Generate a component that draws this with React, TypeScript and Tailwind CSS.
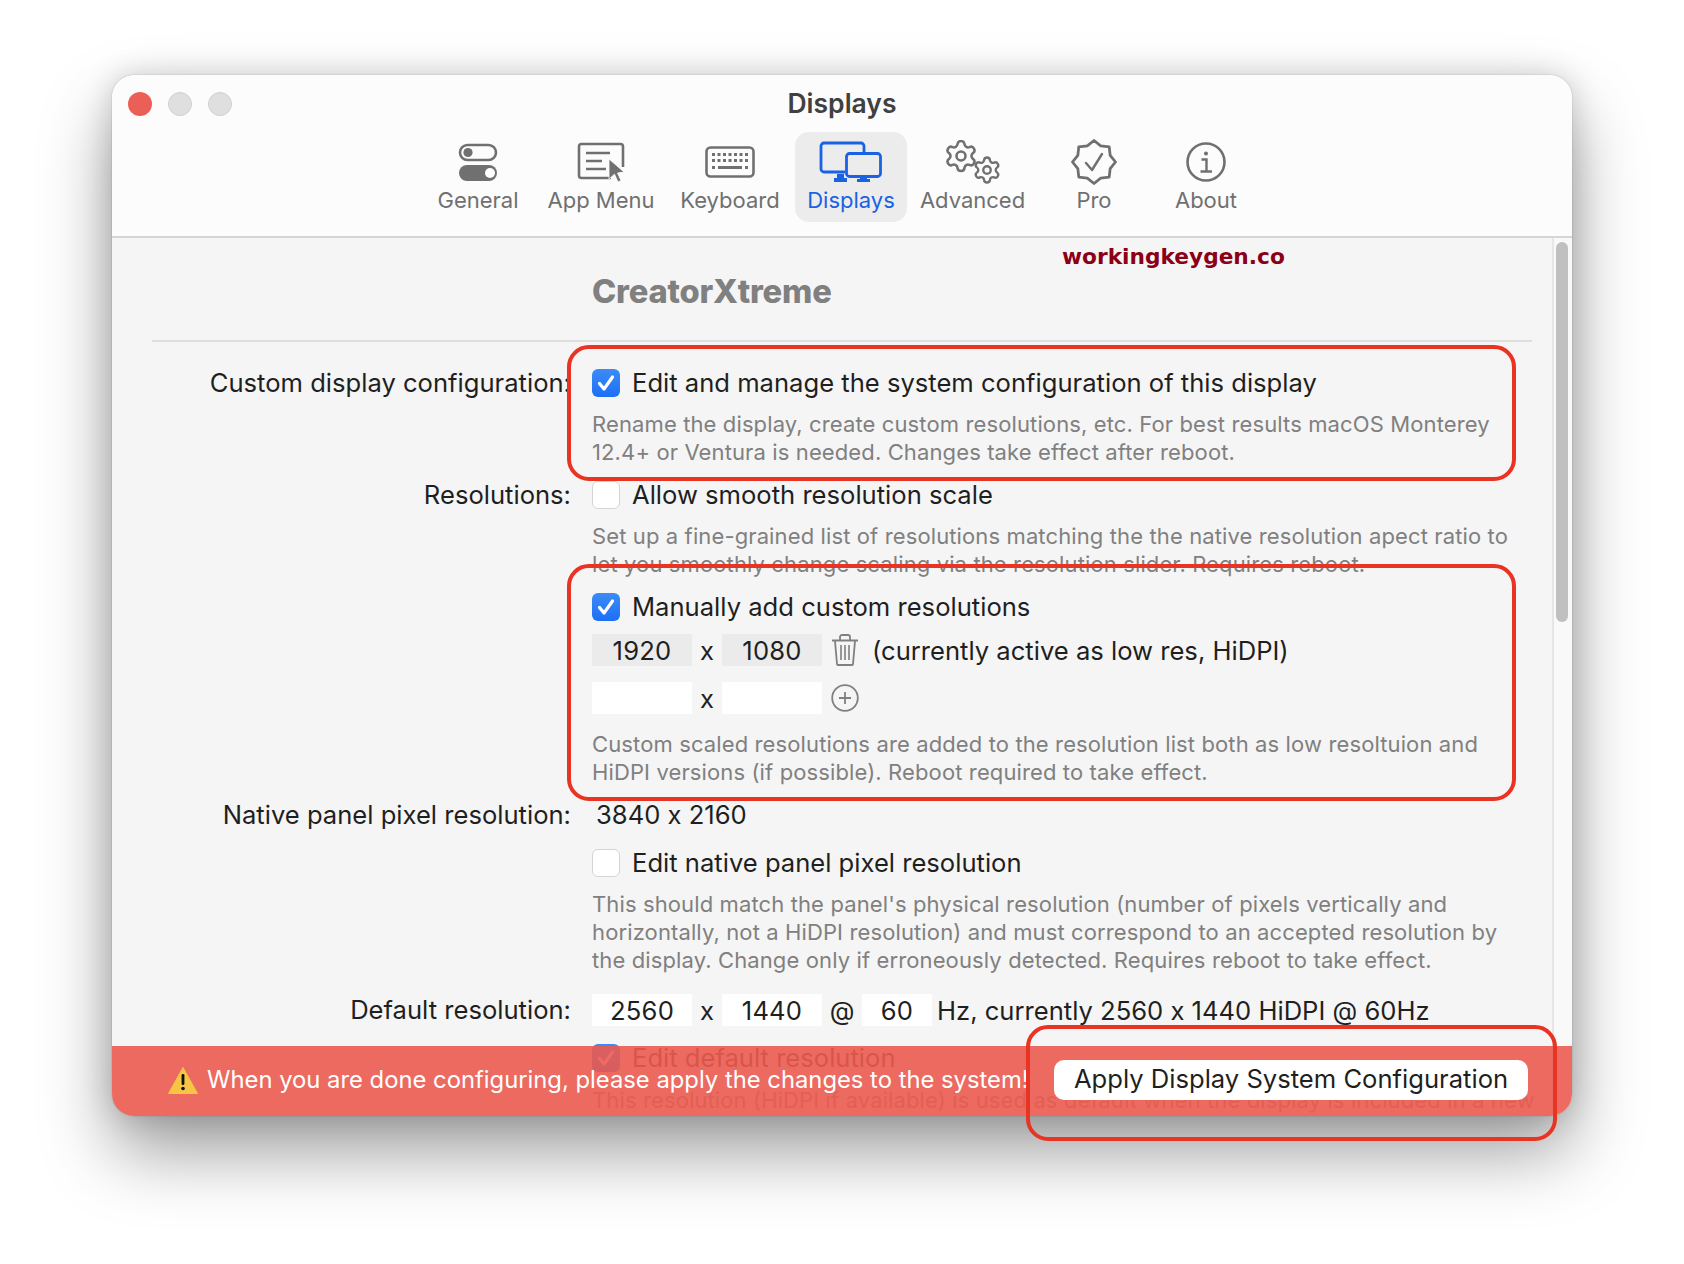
import { Settings } from "lucide-react"

const sans = "font-['Inter','Noto_Sans',sans-serif]"

// General - two toggles
function GeneralIcon() {
    return (
        <svg width="40" height="38" viewBox="0 0 40 38" fill="none">
            <rect x="2" y="2" width="36" height="15" rx="7.5" stroke="#707070" strokeWidth="2.6" />
            <circle cx="10" cy="9.5" r="4.6" fill="#707070" />
            <rect x="1" y="22" width="38" height="16" rx="8" fill="#707070" />
            <circle cx="32" cy="30" r="5" fill="#fff" />
        </svg>
    )
}

function AppMenuIcon() {
    return (
        <svg width="48" height="40" viewBox="0 0 48 40" fill="none">
            <path d="M34 36H4.500A2.500 2.500 0 0 1 2 33.500V4.500A2.500 2.500 0 0 1 4.500 2h39A2.500 2.500 0 0 1 46 4.500V25" stroke="#707070" strokeWidth="2.600" />
            <path d="M9 11h24M9 19h16M9 27h20" stroke="#707070" strokeWidth="2.400" />
            <path d="M32 17l15 13-6.500 1 3.500 7.500-3 1.500-3.500-7.800-5.500 4.800z" fill="#707070" stroke="#fcfcfc" strokeWidth="0.800" />
        </svg>
    )
}

function KeyboardIcon() {
    const keys = [0, 1, 2, 3, 4, 5, 6]
    return (
        <svg width="50" height="32" viewBox="0 0 50 32" fill="none">
            <rect x="1.500" y="1.500" width="47" height="29" rx="4" stroke="#707070" strokeWidth="2.600" />
            {[7, 13].map((y) =>
                keys.map((k) => <rect key={`${y}-${k}`} x={7 + k * 5.500} y={y} width="3" height="3" fill="#707070" />)
            )}
            <rect x="7" y="20" width="3" height="3" fill="#707070" />
            <rect x="13" y="20" width="24" height="3" fill="#707070" />
            <rect x="40" y="20" width="3" height="3" fill="#707070" />
        </svg>
    )
}

function DisplaysIcon() {
    return (
        <svg width="64" height="42" viewBox="0 0 64 42" fill="none">
            <path d="M26 31H5a3 3 0 0 1-3-3V5a3 3 0 0 1 3-3h37a3 3 0 0 1 3 3v6" stroke="#1a62e4" strokeWidth="2.800" />
            <rect x="27.500" y="12.500" width="34" height="23" rx="3" fill="#ececec" stroke="#1a62e4" strokeWidth="2.800" />
            <path d="M18 33h7v4h3v4H15v-4h3zM41 37h7v1h3v3H38v-3h3z" fill="#1a62e4" />
        </svg>
    )
}

function AdvancedIcon() {
    return (
        <svg width="56" height="44" viewBox="0 0 56 44" fill="none">
            <Settings x={-2} y={-2} width={36} height={36} color="#707070" strokeWidth={1.700} />
            <Settings x={27} y={15} width={30} height={30} color="#707070" strokeWidth={1.900} />
        </svg>
    )
}

// eight pointed seal, points worked out once at module level
const sealPoints = Array.from({ length: 16 }, (_, i) => {
    const r = i % 2 === 0 ? 21.500 : 17.500
    const a = (i * Math.PI) / 8 - Math.PI / 2
    return `${(23 + r * Math.cos(a)).toFixed(2)},${(23 + r * Math.sin(a)).toFixed(2)}`
}).join(" ")

function ProIcon() {
    return (
        <svg width="46" height="46" viewBox="0 0 46 46" fill="none">
            <polygon points={sealPoints} stroke="#707070" strokeWidth="2.800" strokeLinejoin="round" />
            <path d="M15 24l6 7 10-16" stroke="#707070" strokeWidth="2.400" strokeLinecap="round" strokeLinejoin="round" />
        </svg>
    )
}

function AboutIcon() {
    return (
        <svg width="40" height="40" viewBox="0 0 40 40" fill="none">
            <circle cx="20" cy="20" r="18.500" stroke="#707070" strokeWidth="2.600" />
            <circle cx="20" cy="11.500" r="2" fill="#707070" />
            <path d="M15.500 17.500H20.500V29M14.500 29.500H26" stroke="#707070" strokeWidth="2.400" />
        </svg>
    )
}

function TrashIcon() {
    return (
        <svg width="28" height="32" viewBox="0 0 28 32" fill="none" stroke="#808080">
            <path d="M1 6.500h26" strokeWidth="2" />
            <path d="M9 6V3a2 2 0 0 1 2-2h6a2 2 0 0 1 2 2v3" strokeWidth="1.800" />
            <path d="M4 7l2 23a1 1 0 0 0 1 1h14a1 1 0 0 0 1-1l2-23" strokeWidth="1.800" />
            <path d="M10 11v15M14 11v15M18 11v15" strokeWidth="1.600" />
        </svg>
    )
}

function PlusIcon() {
    return (
        <svg width="28" height="28" viewBox="0 0 28 28" fill="none" stroke="#808080">
            <circle cx="14" cy="14" r="12.800" strokeWidth="1.800" />
            <path d="M14 8v12M8 14h12" strokeWidth="1.800" />
        </svg>
    )
}

function WarningIcon() {
    return (
        <svg width="30" height="28" viewBox="0 0 30 28">
            <path d="M15 1.500L29.500 27.500H.500z" fill="#f7c545" stroke="#f7c545" strokeLinejoin="round" />
            <rect x="13.600" y="8" width="2.800" height="11" rx="1.200" fill="#111" />
            <circle cx="15" cy="22.500" r="1.800" fill="#111" />
        </svg>
    )
}

function Checkbox({ checked }: { checked?: boolean }) {
    if (!checked) {
        return <div className="w-[28px] h-[28px] rounded-[6px] bg-white border border-[#d4d4d4] shrink-0" />
    }
    return (
        <div className="w-[28px] h-[28px] rounded-[6px] bg-gradient-to-b from-[#3d8bf8] to-[#1c6ff5] shrink-0 flex items-center justify-center">
            <svg width="20" height="20" viewBox="0 0 20 20" fill="none">
                <path d="M3.500 10.500l4.500 5.500 8.500-12" stroke="#fff" strokeWidth="3.200" strokeLinecap="round" strokeLinejoin="round" />
            </svg>
        </div>
    )
}

function Field({ value, active, w = "w-[100px]" }: { value?: string; active?: boolean; w?: string }) {
    return (
        <div className={`${w} h-[32px] pt-[3px] ${active ? "bg-[#ebebeb]" : "bg-white"} flex items-center justify-center tracking-[0.2px]`}>
            {value}
        </div>
    )
}

function Row({ label, className, children }: { label?: string; className?: string; children: React.ReactNode }) {
    return (
        <div className={`flex items-center h-[32px] ${className ?? ""}`}>
            <div className="w-[459px] text-right shrink-0 whitespace-nowrap">{label}</div>
            <div className="ml-[21px] flex items-center whitespace-nowrap">{children}</div>
        </div>
    )
}

function Desc({ lines, className }: { lines: string[]; className?: string }) {
    return (
        <div className={`pl-[480px] text-[22px] leading-[28px] text-[#808080] tracking-[0.12px] whitespace-nowrap ${className ?? ""}`}>
            {lines.map((l) => (
                <div key={l}>{l}</div>
            ))}
        </div>
    )
}

const tabs = [
    { name: "General", w: "w-[122px]", icon: <GeneralIcon /> },
    { name: "App Menu", w: "w-[124px]", icon: <AppMenuIcon /> },
    { name: "Keyboard", w: "w-[130px] ml-[2px]", icon: <KeyboardIcon /> },
    { name: "Displays", w: "w-[112px]", icon: <DisplaysIcon />, active: true },
    { name: "Advanced", w: "w-[131px]", icon: <AdvancedIcon /> },
    { name: "Pro", w: "w-[112px]", icon: <ProIcon /> },
    { name: "About", w: "w-[112px]", icon: <AboutIcon /> },
]

export default function App() {
    return (
        <div className={`relative w-[1684px] h-[1264px] bg-white overflow-hidden pt-[75px] pl-[112px] text-[25.6px] text-[#1f1f1f] [font-feature-settings:'calt'_0] ${sans}`}>
            {/* Window */}
            <div className="relative w-[1460px] h-[1041px] rounded-[22px] overflow-hidden flex flex-col bg-[#f5f5f5] shadow-[0_0_1px_rgba(0,0,0,0.5),0_36px_70px_rgba(0,0,0,0.38),0_0_30px_rgba(0,0,0,0.16)]">
                {/* Title bar and toolbar */}
                <div className="h-[163px] shrink-0 bg-[#fcfcfc] border-b-2 border-[#d6d6d6] relative">
                    <div className="flex gap-[16px] absolute left-[16px] top-[17px]">
                        <div className="w-[24px] h-[24px] rounded-full bg-[#ec5f56]" />
                        <div className="w-[24px] h-[24px] rounded-full bg-[#dfdfdf] border border-[#cfcfcf]" />
                        <div className="w-[24px] h-[24px] rounded-full bg-[#dfdfdf] border border-[#cfcfcf]" />
                    </div>
                    <div className="h-[57px] flex items-center justify-center text-[26.500px] font-semibold text-[#404040] pt-[1px]">
                        Displays
                    </div>
                    <div className="flex pl-[305px]">
                        {tabs.map((t) => (
                            <div
                                key={t.name}
                                className={`${t.w} h-[90px] rounded-[14px] flex flex-col items-center ${t.active ? "bg-[#ececec] text-[#1a62e4]" : "text-[#707070]"}`}
                            >
                                <div className="h-[54px] flex items-center justify-center pt-[5px]">{t.icon}</div>
                                <div className="text-[22px] leading-[28px] whitespace-nowrap">{t.name}</div>
                            </div>
                        ))}
                    </div>
                </div>

                {/* Scrolling form, the banner lies over it */}
                <div className="relative flex-1 overflow-hidden">
                    <div className="absolute right-0 top-0 bottom-0 w-[20px] bg-[#f9f9f9] border-l-2 border-[#e6e6e6]">
                        <div className="absolute left-[2px] top-[4px] w-[12px] h-[380px] rounded-full bg-[#c0c0c0]" />
                    </div>

                    <div className="w-[1440px]">
                        <div className="pl-[480px] pt-[31px] h-[102px] text-[32.700px] leading-[44px] font-extrabold text-[#808080] tracking-[-0.2px]">
                            CreatorXtreme
                        </div>
                        <div className="ml-[40px] mr-[20px] h-[2px] bg-[#dedede]" />

                        <Row label="Custom display configuration:" className="mt-[25px]">
                            <Checkbox checked />
                            <span className="ml-[12px]">Edit and manage the system configuration of this display</span>
                        </Row>
                        <Desc
                            className="mt-[11px]"
                            lines={[
                                "Rename the display, create custom resolutions, etc. For best results macOS Monterey",
                                "12.4+ or Ventura is needed. Changes take effect after reboot.",
                            ]}
                        />

                        <Row label="Resolutions:" className="mt-[13px]">
                            <Checkbox />
                            <span className="ml-[12px]">Allow smooth resolution scale</span>
                        </Row>
                        <Desc
                            className="mt-[11px]"
                            lines={[
                                "Set up a fine-grained list of resolutions matching the the native resolution apect ratio to",
                                "let you smoothly change scaling via the resolution slider. Requires reboot.",
                            ]}
                        />

                        <Row className="mt-[13px]">
                            <Checkbox checked />
                            <span className="ml-[12px]">Manually add custom resolutions</span>
                        </Row>
                        <Row className="mt-[11px]">
                            <Field value="1920" active />
                            <span className="w-[30px] text-center pt-[2px]">x</span>
                            <Field value="1080" active />
                            <div className="ml-[9px]">
                                <TrashIcon />
                            </div>
                            <span className="ml-[13px] pt-[2px]">(currently active as low res, HiDPI)</span>
                        </Row>
                        <Row className="mt-[16px]">
                            <Field />
                            <span className="w-[30px] text-center pt-[2px]">x</span>
                            <Field />
                            <div className="ml-[9px]">
                                <PlusIcon />
                            </div>
                        </Row>
                        <Desc
                            className="mt-[16px]"
                            lines={[
                                "Custom scaled resolutions are added to the resolution list both as low resoltuion and",
                                "HiDPI versions (if possible). Reboot required to take effect.",
                            ]}
                        />

                        <Row label="Native panel pixel resolution:" className="mt-[13px]">
                            <span className="ml-[4px]">3840 x 2160</span>
                        </Row>
                        <Row className="mt-[16px]">
                            <Checkbox />
                            <span className="ml-[12px]">Edit native panel pixel resolution</span>
                        </Row>
                        <Desc
                            className="mt-[11px]"
                            lines={[
                                "This should match the panel's physical resolution (number of pixels vertically and",
                                "horizontally, not a HiDPI resolution) and must correspond to an accepted resolution by",
                                "the display. Change only if erroneously detected. Requires reboot to take effect.",
                            ]}
                        />

                        <Row label="Default resolution:" className="mt-[20px]">
                            <Field value="2560" />
                            <span className="w-[30px] text-center pt-[2px]">x</span>
                            <Field value="1440" />
                            <span className="w-[40px] text-center pt-[2px]">@</span>
                            <Field value="60" w="w-[70px]" />
                            <span className="ml-[5px] pt-[2px]">Hz, currently 2560 x 1440 HiDPI @ 60Hz</span>
                        </Row>
                        <Row className="mt-[16px]">
                            <Checkbox checked />
                            <span className="ml-[12px]">Edit default resolution</span>
                        </Row>
                        <Desc
                            className="mt-[12px]"
                            lines={["This resolution (HiDPI if available) is used as default when the display is included in a new"]}
                        />
                    </div>

                    {/* Banner */}
                    <div className="absolute left-0 right-0 bottom-0 h-[70px] bg-[#eb5b4f]/90 flex items-center pl-[56px] pb-[3px] text-white">
                        <WarningIcon />
                        <span className="ml-[9px] text-[23.800px] whitespace-nowrap">When you are done configuring, please apply the changes to the system!</span>
                        <div className="absolute left-[942px] top-[14px] w-[474px] h-[40px] pb-[1px] rounded-[10px] bg-white text-[#1f1f1f] flex items-center justify-center whitespace-nowrap">
                            Apply Display System Configuration
                        </div>
                    </div>
                </div>
            </div>

            {/* Site watermark */}
            <div className="absolute left-[1062px] top-[243px] font-['DejaVu_Sans',sans-serif] font-bold text-[21.700px] leading-[28px] text-[#8b0016] whitespace-nowrap">
                workingkeygen.co
            </div>

            {/* Red annotation boxes */}
            <div className="absolute left-[567px] top-[345px] w-[949px] h-[136px] rounded-[22px] border-[4.500px] border-[#e93323]" />
            <div className="absolute left-[567px] top-[564px] w-[949px] h-[237px] rounded-[22px] border-[4.500px] border-[#e93323]" />
            <div className="absolute left-[1026px] top-[1025px] w-[531px] h-[116px] rounded-[22px] border-[4.500px] border-[#e93323]" />
        </div>
    )
}
